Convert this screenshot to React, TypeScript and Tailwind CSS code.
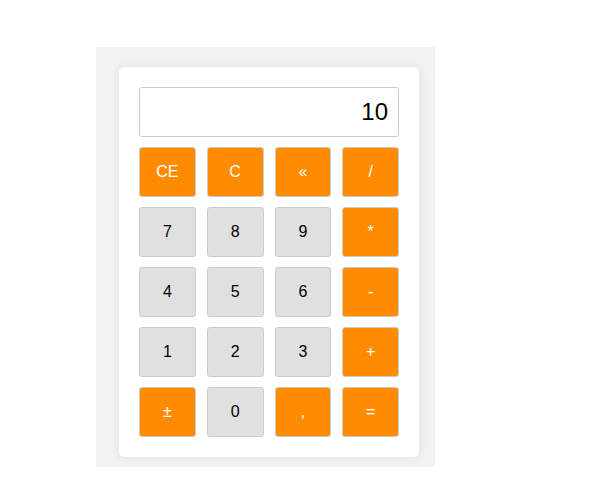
const keys: { label: string; op?: boolean }[] = [
  { label: 'CE', op: true },
  { label: 'C', op: true },
  { label: '«', op: true },
  { label: '/', op: true },
  { label: '7' },
  { label: '8' },
  { label: '9' },
  { label: '*', op: true },
  { label: '4' },
  { label: '5' },
  { label: '6' },
  { label: '-', op: true },
  { label: '1' },
  { label: '2' },
  { label: '3' },
  { label: '+', op: true },
  { label: '±', op: true },
  { label: '0' },
  { label: ',', op: true },
  { label: '=', op: true },
];

export default function App() {
  return (
    <div className="min-h-[493px] bg-white font-['Liberation_Sans',Arial,sans-serif]">
      <div className="ml-[96px] pt-[47px]">
        <div className="w-[339px] bg-[#f2f2f2] pl-[23px] pt-[20px] pb-[10px]">
          {/* Calculadora */}
          <div className="w-[300px] rounded-[5px] bg-white p-[20px] shadow-[0_0_10px_rgba(0,0,0,0.08)]">
            <div className="flex h-[50px] items-center justify-end rounded-[3px] border border-[#ccc] bg-white pr-[10px] text-[24px] text-black">
              10
            </div>
            <div className="mt-[10px] grid grid-cols-4 gap-x-[11px] gap-y-[10px]">
              {keys.map((k) => (
                <button
                  key={k.label}
                  className={
                    k.op
                      ? 'h-[50px] rounded-[3px] border border-[#ccc] bg-[#ff8c00] text-[16px] text-white'
                      : 'h-[50px] rounded-[3px] border border-[#ccc] bg-[#e0e0e0] text-[16px] text-black'
                  }
                >
                  {k.label}
                </button>
              ))}
            </div>
          </div>
        </div>
      </div>
    </div>
  );
}
